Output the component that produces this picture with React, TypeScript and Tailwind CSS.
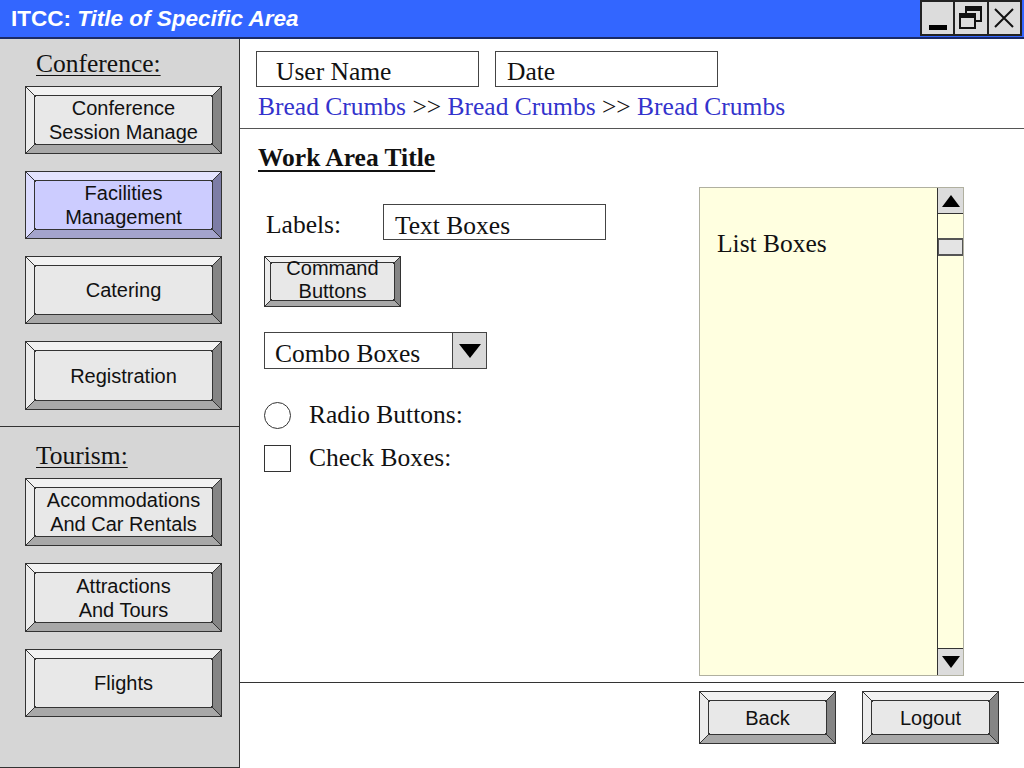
import type { ReactNode } from 'react'

type BevelProps = {
  className: string
  purple?: boolean
  small?: boolean
  children: ReactNode
}

function Corner({ pos, size }: { pos: 'tl' | 'tr' | 'bl' | 'br'; size: number }) {
  const place = {
    tl: 'top-0 left-0',
    tr: 'top-0 right-0',
    bl: 'bottom-0 left-0',
    br: 'bottom-0 right-0',
  }[pos]
  const flip = pos === 'tr' || pos === 'bl'
  return (
    <svg className={`absolute ${place} pointer-events-none`} width={size} height={size}>
      {flip ? (
        <line x1={size} y1={0} x2={0} y2={size} stroke="#333" strokeWidth="1" />
      ) : (
        <line x1={0} y1={0} x2={size} y2={size} stroke="#333" strokeWidth="1" />
      )}
    </svg>
  )
}

function Bevel({ className, purple, small, children }: BevelProps) {
  const bevel = purple
    ? 'border-t-[#e4e4ff] border-l-[#dcdcff] border-b-[#a3a3cc] border-r-[#7d7da6]'
    : 'border-t-[#f2f2f2] border-l-[#ececec] border-b-[#a8a8a8] border-r-[#858585]'
  const face = purple ? 'bg-[#ccccff]' : 'bg-[#e8e8e8]'
  const cs = small ? 7 : 10
  return (
    <div className={`relative border border-[#333] ${className}`}>
      <div className={`h-full ${small ? 'border-[5px]' : 'border-[8px]'} ${bevel}`}>
        <div
          className={`h-full border border-[#333] ${face} flex flex-col items-center justify-center text-center text-[#111] font-['Liberation_Sans',Arial,sans-serif] text-[20px] leading-[24px] whitespace-nowrap`}
        >
          {children}
        </div>
      </div>
      <Corner pos="tl" size={cs} />
      <Corner pos="tr" size={cs} />
      <Corner pos="bl" size={cs} />
      <Corner pos="br" size={cs} />
    </div>
  )
}

const serif = "font-['Liberation_Serif','Times_New_Roman',serif]"

export default function App() {
  return (
    <div className="w-[1024px] h-[768px] flex flex-col bg-white overflow-hidden">
      {/* Title bar */}
      <div className="h-[39px] shrink-0 bg-[#3366ff] border-b-2 border-[#1a2a66] flex items-start justify-between">
        <div className="pl-[11px] pt-[5px] text-white text-[22.5px] leading-[28px] font-bold font-['Liberation_Sans',Arial,sans-serif]">
          ITCC: <span className="italic">Title of Specific Area</span>
        </div>
        <div className="mr-[2px] h-[36px] w-[102px] flex border-2 border-[#222] bg-[#dcdcdc]">
          <div className="flex-1 flex items-end justify-center pb-[4px] border-r-2 border-[#222]">
            <div className="w-[18px] h-[5px] bg-black" />
          </div>
          <div className="flex-1 flex items-center justify-center border-r-2 border-[#222]">
            <svg width="26" height="26" viewBox="0 0 26 26">
              <rect x="8" y="2" width="15" height="14" fill="none" stroke="#111" strokeWidth="2" />
              <rect x="8" y="2" width="15" height="4" fill="#111" />
              <rect x="2" y="9" width="15" height="14" fill="#dcdcdc" stroke="#111" strokeWidth="2" />
              <rect x="2" y="9" width="15" height="4" fill="#111" />
            </svg>
          </div>
          <div className="flex-1 flex items-center justify-center">
            <svg width="22" height="22" viewBox="0 0 22 22">
              <path d="M2 2 L20 20 M20 2 L2 20" stroke="#111" strokeWidth="2" />
            </svg>
          </div>
        </div>
      </div>

      <div className="flex flex-1 min-h-0">
        {/* Sidebar */}
        <div className="w-[240px] shrink-0 bg-[#d6d6d6] border-r border-b border-[#333] flex flex-col">
          <div className="h-[388px] border-b border-[#333] pt-[11px] pl-[25px]">
            <div className={`${serif} text-[25.5px] leading-[28px] underline underline-offset-[3px] decoration-1 text-[#111] pl-[11px]`}>
              Conference:
            </div>
            <div className="mt-[8px] flex flex-col gap-[17px]">
              <Bevel className="w-[197px] h-[68px]">
                <span>Conference</span>
                <span>Session Manage</span>
              </Bevel>
              <Bevel className="w-[197px] h-[68px]" purple>
                <span>Facilities</span>
                <span>Management</span>
              </Bevel>
              <Bevel className="w-[197px] h-[68px]">
                <span>Catering</span>
              </Bevel>
              <Bevel className="w-[197px] h-[69px]">
                <span>Registration</span>
              </Bevel>
            </div>
          </div>
          <div className="flex-1 pt-[15px] pl-[25px]">
            <div className={`${serif} text-[25.5px] leading-[28px] underline underline-offset-[3px] decoration-1 text-[#111] pl-[11px]`}>
              Tourism:
            </div>
            <div className="mt-[8px] flex flex-col gap-[17px]">
              <Bevel className="w-[197px] h-[68px]">
                <span>Accommodations</span>
                <span>And Car Rentals</span>
              </Bevel>
              <Bevel className="w-[197px] h-[69px]">
                <span>Attractions</span>
                <span>And Tours</span>
              </Bevel>
              <Bevel className="w-[197px] h-[68px]">
                <span>Flights</span>
              </Bevel>
            </div>
          </div>
        </div>

        {/* Main */}
        <div className={`flex-1 flex flex-col ${serif} text-[#111]`}>
          {/* Header */}
          <div className="h-[90px] shrink-0 border-b border-[#555] pt-[12px] pl-[16px]">
            <div className="flex gap-[16px]">
              <div className="w-[223px] h-[36px] border border-[#444] pl-[19px] text-[25.5px] leading-[40px]">User Name</div>
              <div className="w-[223px] h-[36px] border border-[#444] pl-[11px] text-[25.5px] leading-[40px]">Date</div>
            </div>
            <div className="pl-[2px] mt-[6px] text-[25.5px] leading-[28px]">
              <span className="text-[#3333cc]">Bread Crumbs</span> &gt;&gt;{' '}
              <span className="text-[#3333cc]">Bread Crumbs</span> &gt;&gt;{' '}
              <span className="text-[#3333cc]">Bread Crumbs</span>
            </div>
          </div>

          {/* Work area */}
          <div className="flex-1 flex">
            <div className="flex-1 pl-[18px] pt-[15px]">
              <div className="text-[25.5px] leading-[28px] font-bold underline underline-offset-[4px] decoration-2">
                Work Area Title
              </div>
              <div className="mt-[32px] flex items-start">
                <span className="w-[125px] pl-[8px] pt-[7px] text-[25.5px] leading-[28px]">Labels:</span>
                <div className="w-[223px] h-[36px] border border-[#444] pl-[11px] text-[25.5px] leading-[42px]">Text Boxes</div>
              </div>
              <div className="mt-[16px] pl-[6px]">
                <Bevel className="w-[137px] h-[51px]" small>
                  <span className="leading-[23px] -mt-[3px]">Command</span>
                  <span className="leading-[23px]">Buttons</span>
                </Bevel>
              </div>
              <div className="mt-[25px] ml-[6px] w-[223px] h-[37px] border border-[#444] flex">
                <div className="flex-1 pl-[10px] text-[25.5px] leading-[42px]">Combo Boxes</div>
                <div className="w-[34px] border-l border-[#444] bg-[#d9d9d9] flex items-center justify-center">
                  <svg width="24" height="18" viewBox="0 0 24 18">
                    <path d="M1 2 H23 L12 16 Z" fill="#000" />
                  </svg>
                </div>
              </div>
              <div className="mt-[32px] ml-[6px] flex items-center gap-[18px]">
                <div className="w-[27px] h-[27px] rounded-full border border-[#333] bg-white" />
                <span className="text-[25.5px] leading-[28px]">Radio Buttons:</span>
              </div>
              <div className="mt-[15px] ml-[6px] flex items-center gap-[18px]">
                <div className="w-[27px] h-[27px] border border-[#333] bg-white" />
                <span className="text-[25.5px] leading-[28px]">Check Boxes:</span>
              </div>
            </div>

            <div className="w-[265px] h-[489px] mt-[58px] mr-[60px] bg-[#ffffe0] border border-[#b0b0a0] flex">
              <div className="flex-1 pt-[42px] pl-[17px] text-[25.5px] leading-[28px]">List Boxes</div>
              <div className="w-[26px] border-l border-[#333] flex flex-col">
                <div className="h-[26px] bg-[#dcdcdc] border-b border-[#333] flex items-center justify-center">
                  <svg width="20" height="14" viewBox="0 0 20 14">
                    <path d="M10 1 L19 13 H1 Z" fill="#000" />
                  </svg>
                </div>
                <div className="mt-[24px] h-[18px] bg-[#e4e4e4] border-y-2 border-x border-[#555]" />
                <div className="flex-1" />
                <div className="h-[27px] bg-[#dcdcdc] border-t border-[#333] flex items-center justify-center">
                  <svg width="20" height="14" viewBox="0 0 20 14">
                    <path d="M1 1 H19 L10 13 Z" fill="#000" />
                  </svg>
                </div>
              </div>
            </div>
          </div>

          {/* Footer */}
          <div className="h-[86px] shrink-0 border-t border-[#333] pt-[8px] pr-[25px] flex justify-end gap-[26px]">
            <Bevel className="w-[137px] h-[53px]">
              <span>Back</span>
            </Bevel>
            <Bevel className="w-[137px] h-[53px]">
              <span>Logout</span>
            </Bevel>
          </div>
        </div>
      </div>
    </div>
  )
}
